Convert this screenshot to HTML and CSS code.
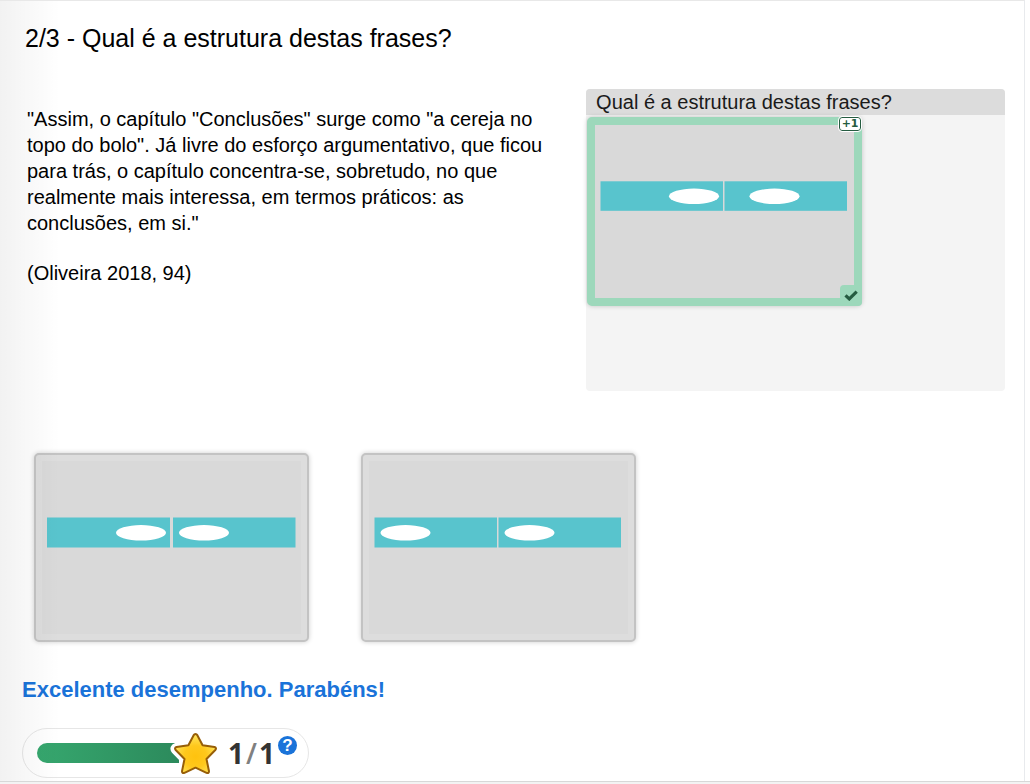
FILE: index.html
```html
<!DOCTYPE html>
<html lang="pt">
<head>
<meta charset="utf-8">
<meta name="viewport" content="width=device-width, initial-scale=1">
<title>Qual é a estrutura destas frases?</title>
<link rel="stylesheet" href="styles.css">
</head>
<body>
<main class="question">
  <h1 class="question-title">2/3 - Qual é a estrutura destas frases?</h1>

  <div class="task">
    <div class="passage">
      <p>"Assim, o capítulo "Conclusões" surge como "a cereja no topo do bolo". Já livre do esforço argumentativo, que ficou para trás, o capítulo concentra-se, sobretudo, no que realmente mais interessa, em termos práticos: as conclusões, em si."</p>
      <p>(Oliveira 2018, 94)</p>
    </div>
    <section class="dropzone" aria-labelledby="zone-label">
      <h2 class="dropzone-label" id="zone-label">Qual é a estrutura destas frases?</h2>
      <div class="card card-correct">
        <svg class="card-image" viewBox="0 0 259 173" role="img" aria-label="Tema no fim da primeira frase e no início da segunda">
          <rect class="band" x="5.5" y="56.3" width="122.5" height="29.5"/>
          <rect class="band" x="129.5" y="56.3" width="122.5" height="29.5"/>
          <ellipse class="spot" cx="99" cy="71.3" rx="25" ry="7.7"/>
          <ellipse class="spot" cx="179.5" cy="71.3" rx="25" ry="7.7"/>
        </svg>
        <span class="points">+1</span>
        <span class="tick">
          <svg class="tick-icon" viewBox="0 0 14 11" aria-hidden="true"><path d="M1.500 5.300 5.300 8.900 12.700 1.700"/></svg>
        </span>
      </div>
    </section>
  </div>

  <div class="options">
    <button class="card" type="button" aria-label="Opção 1">
      <svg class="card-image" viewBox="0 0 259 173" aria-hidden="true">
        <rect class="band" x="5" y="56.5" width="123" height="30"/>
        <rect class="band" x="131" y="56.5" width="122.5" height="30"/>
        <ellipse class="spot" cx="99" cy="71.8" rx="25" ry="7.7"/>
        <ellipse class="spot" cx="162" cy="71.8" rx="25" ry="7.7"/>
      </svg>
    </button>
    <button class="card" type="button" aria-label="Opção 2">
      <svg class="card-image" viewBox="0 0 259 173" aria-hidden="true">
        <rect class="band" x="5.5" y="56.5" width="122.5" height="30"/>
        <rect class="band" x="129.5" y="56.5" width="122.5" height="30"/>
        <ellipse class="spot" cx="36.5" cy="71.8" rx="25" ry="7.7"/>
        <ellipse class="spot" cx="160.5" cy="71.8" rx="25" ry="7.7"/>
      </svg>
    </button>
  </div>

  <p class="feedback">Excelente desempenho. Parabéns!</p>

  <div class="score">
    <svg class="score-bar" viewBox="0 0 180 44" aria-hidden="true">
      <defs>
        <linearGradient id="bar-fill"><stop offset="0" stop-color="#36a76e"/><stop offset="1" stop-color="#2c8a5c"/></linearGradient>
        <radialGradient id="star-fill" cx=".5" cy=".58" r=".55"><stop offset="0" stop-color="#ffc20e"/><stop offset=".5" stop-color="#ffc81c"/><stop offset="1" stop-color="#ffe45a"/></radialGradient>
      </defs>
      <path fill="url(#bar-fill)" d="M10 12H142V32H10A10 10 0 0 1 10 12Z"/>
      <path class="star-halo" d="M158.500 3.500 Q159.500 3.500 160 4.500L165 14.500 177.500 16.200Q180 17 178.500 18.800L169.500 28 172 40.500Q172.300 43 169.500 42L158.500 36.700 147.500 42Q144.700 43 145 40.500L147.500 28 138.500 18.800Q137 17 139.500 16.200L152 14.500 157 4.500Q157.500 3.500 158.500 3.500Z"/>
      <path class="star" fill="url(#star-fill)" d="M158.500 3 Q159.700 3 160.200 4L165.600 14.300 177.500 16Q180 17 178.300 19L169.500 28 172 40.200Q172 42.700 169.500 41.800L158.500 36.700 147.500 41.800Q145 42.700 145 40.200L147.500 28 138.700 19Q137 17 139.500 16L151.400 14.300 156.800 4Q157.300 3 158.500 3Z"/>
    </svg>
    <span class="score-text">1<span class="slash">/</span>1</span>
    <button class="help" type="button" aria-label="Ajuda">?</button>
  </div>
</main>
</body>
</html>
```
FILE: styles.css
```css
* {
  box-sizing: border-box;
}

body {
  margin: 0;
  background: #fff;
  color: #000;
  font-family: "Liberation Sans", Arial, sans-serif;
}

h1, h2, p {
  margin: 0;
  font-weight: normal;
}

button {
  font: inherit;
  cursor: pointer;
}

.question {
  position: relative;
  margin-right: 5px;
  padding: 23px 19px 3px 22px;
  border-top: 1px solid #e8e8e8;
  border-right: 1px solid #e8eaed;
}

/* soft shade along the left edge, over the cards */
.question::before {
  content: "";
  position: absolute;
  z-index: 1;
  inset: 0 auto 0 0;
  width: 60px;
  background: linear-gradient(to right, rgba(0, 0, 0, 0.05), rgba(0, 0, 0, 0));
  pointer-events: none;
}

/* bottom rule of the frame, across the whole window */
body::after {
  content: "";
  display: block;
  height: 3px;
  border-top: 1px solid #d8d8d8;
  background: #f3f3f3;
}

.question-title {
  padding-left: 3px;
  font-size: 25px;
  line-height: 28px;
}

.task {
  display: grid;
  grid-template-columns: 22fr 17fr;
  gap: 22px;
  margin-top: 37px;
}

.passage {
  display: grid;
  align-content: start;
  gap: 24px;
  padding: 17px 0 0 5px;
  font-size: 20px;
  line-height: 26px;
}

.dropzone {
  min-height: 302px;
  border-radius: 4px;
  background: #f4f4f4;
}

.dropzone-label {
  padding-left: 10px;
  border-radius: 4px 4px 0 0;
  background: #dcdcdc;
  color: #1a1a1a;
  font-size: 20px;
  line-height: 26px;
}

.card {
  position: relative;
  display: block;
  width: 275px;
  padding: 6px;
  border: 2px solid #c3c3c3;
  border-radius: 5px;
  background: #dddddd;
  box-shadow: 0 0 5px rgba(0, 0, 0, 0.2);
}

.card-correct {
  margin: 2px 0 0 1px;
  border-color: #9dd8bb;
  background: #9dd8bb;
}

.card-image {
  display: block;
  width: 100%;
  background: #d9d9d9;
}

.band {
  fill: #58c4cd;
}

.spot {
  fill: #fff;
}

.points {
  position: absolute;
  top: -2px;
  right: -1px;
  width: 22px;
  border: 1px solid #255c41;
  border-radius: 3px;
  outline: 1px solid #fff;
  background: #fff;
  color: #255c41;
  font-family: "DejaVu Sans", sans-serif;
  font-size: 11px;
  font-weight: bold;
  line-height: 12px;
  text-align: center;
}

.tick {
  position: absolute;
  right: -2px;
  bottom: -2px;
  width: 22px;
  padding: 5px 4px;
  border-radius: 4px;
  background: #9dd8bb;
}

.tick-icon {
  display: block;
  width: 14px;
  fill: none;
  stroke: #255c41;
  stroke-width: 3.2;
}

.options {
  display: flex;
  flex-wrap: wrap;
  gap: 52px;
  margin-top: 62px;
  padding-left: 12px;
}

.feedback {
  margin-top: 35px;
  color: #1a73d9;
  font-size: 22px;
  font-weight: bold;
  line-height: 26px;
}

.score {
  display: flex;
  align-items: center;
  width: fit-content;
  margin-top: 25px;
  height: 50px;
  padding: 0 11px 0 14px;
  border: 1px solid #e6e6e6;
  border-radius: 25px;
}

.score-bar {
  width: 180px;
}

.score-text {
  margin-left: 11px;
  color: #333;
  font-family: "Open Sans", sans-serif;
  font-size: 28px;
  font-weight: bold;
  line-height: 40px;
}

.slash {
  margin: 0 2px;
  color: #808080;
  font-weight: 600;
}

.star-halo {
  fill: #fff;
  stroke: #fff;
  stroke-width: 9;
  stroke-linejoin: round;
}

.star {
  stroke: #975e07;
  stroke-width: 2;
  stroke-linejoin: round;
}

.help {
  align-self: flex-start;
  width: 19px;
  height: 19px;
  margin: 7px 0 0 3px;
  padding: 0;
  border: 0;
  border-radius: 50%;
  background: #1a73d9;
  color: #fff;
  font-size: 17px;
  font-weight: bold;
  line-height: 19px;
}
```
